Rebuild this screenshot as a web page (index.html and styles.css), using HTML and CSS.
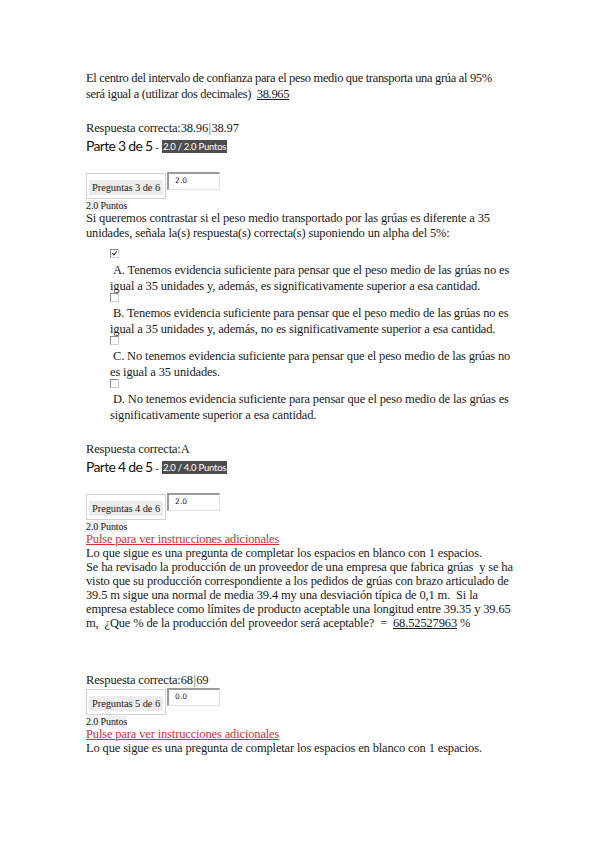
FILE: index.html
```html
<!DOCTYPE html>
<html lang="es">
<head>
<meta charset="utf-8">
<title>Resultados</title>
<link rel="stylesheet" href="styles.css">
</head>
<body>
<div class="page">
  <p class="text first">El centro del intervalo de confianza para el peso medio que transporta una grúa al 95%<br>será igual a (utilizar dos decimales)&nbsp; <span class="given">38.965</span></p>

  <p class="answer gap-big">Respuesta correcta:38.96<span class="sep">|</span>38.97</p>
  <h2 class="part">Parte 3 de 5 <span class="dash">-</span> <span class="badge">2.0 / 2.0 Puntos</span></h2>

  <div class="qhead gap-head">
    <div class="qnum"><span class="qlabel">Preguntas 3 de 6</span></div>
    <div class="score">2.0</div>
  </div>
  <div class="pts"><span>2.0 Puntos</span></div>
  <p class="text">Si queremos contrastar si el peso medio transportado por las grúas es diferente a 35<br>unidades, señala la(s) respuesta(s) correcta(s) suponiendo un alpha del 5%:</p>

  <div class="options">
    <div class="cb checked"></div>
    <p class="opt">&nbsp;A. Tenemos evidencia suficiente para pensar que el peso medio de las grúas no es<br>igual a 35 unidades y, además, es significativamente superior a esa cantidad.</p>
    <div class="cb"></div>
    <p class="opt">&nbsp;B. Tenemos evidencia suficiente para pensar que el peso medio de las grúas no es<br>igual a 35 unidades y, además, no es significativamente superior a esa cantidad.</p>
    <div class="cb"></div>
    <p class="opt">&nbsp;C. No tenemos evidencia suficiente para pensar que el peso medio de las grúas no<br>es igual a 35 unidades.</p>
    <div class="cb"></div>
    <p class="opt">&nbsp;D. No tenemos evidencia suficiente para pensar que el peso medio de las grúas es<br>significativamente superior a esa cantidad.</p>
  </div>

  <p class="answer gap-big">Respuesta correcta:A</p>
  <h2 class="part">Parte 4 de 5 <span class="dash">-</span> <span class="badge">2.0 / 4.0 Puntos</span></h2>

  <div class="qhead gap-head">
    <div class="qnum"><span class="qlabel">Preguntas 4 de 6</span></div>
    <div class="score">2.0</div>
  </div>
  <div class="pts"><span>2.0 Puntos</span></div>
  <a class="link" href="#">Pulse para ver instrucciones adicionales</a>
  <p class="text fill">Lo que sigue es una pregunta de completar los espacios en blanco con 1 espacios.<br>Se ha revisado la producción de un proveedor de una empresa que fabrica grúas&nbsp; y se ha<br>visto que su producción correspondiente a los pedidos de grúas con brazo articulado de<br>39.5 m sigue una normal de media 39.4 my una desviación típica de 0,1 m.&nbsp; Si la<br>empresa establece como límites de producto aceptable una longitud entre 39.35 y 39.65<br>m,&nbsp; ¿Que % de la producción del proveedor será aceptable?&nbsp; =&nbsp; <span class="given">68.52527963</span> %</p>

  <p class="answer gap-huge">Respuesta correcta:68<span class="sep">|</span>69</p>
  <div class="qhead">
    <div class="qnum"><span class="qlabel">Preguntas 5 de 6</span></div>
    <div class="score">0.0</div>
  </div>
  <div class="pts"><span>2.0 Puntos</span></div>
  <a class="link" href="#">Pulse para ver instrucciones adicionales</a>
  <p class="text fill">Lo que sigue es una pregunta de completar los espacios en blanco con 1 espacios.</p>
</div>
</body>
</html>
```
FILE: styles.css
```css
html, body {
  margin: 0;
  padding: 0;
  background: #ffffff;
}
body {
  font-family: "Liberation Serif", "Times New Roman", serif;
  font-size: 12.5px;
  line-height: 15.5px;
  letter-spacing: -0.15px;
  color: #1a1a1a;
}
.page {
  padding: 70px 0 40px 86px;
  width: 440px;
}
p {
  margin: 0;
}
.text,
.answer,
.opt {
  white-space: nowrap;
}
.first {
  line-height: 16px;
  letter-spacing: -0.33px;
}
.fill {
  line-height: 14px;
}
.given {
  text-decoration: underline;
}
.gap-big {
  margin-top: 19px;
}
.gap-huge {
  margin-top: 43px;
}
.sep {
  color: #555;
  padding: 0 0.5px;
}
.part {
  margin: 0;
  font-family: Lato, "Open Sans", sans-serif;
  font-weight: 400;
  font-size: 14px;
  line-height: 17px;
  letter-spacing: -0.7px;
  color: #111;
}
.dash {
  font-size: 10px;
  letter-spacing: 0;
}
.badge {
  display: inline-block;
  background: #4d4d4d;
  color: #fff;
  font-size: 9.5px;
  line-height: 13px;
  letter-spacing: -0.25px;
  padding: 0 1px;
  vertical-align: 1px;
}
.gap-head {
  margin-top: 16px;
}
.qhead {
  display: flex;
  align-items: flex-start;
}
.qnum {
  border: 1px solid #d2d2d2;
  padding: 6px 2px 3px 2px;
  margin-top: 1px;
}
.qlabel {
  display: block;
  background: #ececec;
  font-size: 10.5px;
  line-height: 15px;
  letter-spacing: -0.1px;
  padding: 0 3px;
  color: #222;
}
.score {
  width: 44px;
  height: 15px;
  margin-left: 1px;
  border: 1px solid #e2e2e2;
  border-top: 2px solid #9a9a9a;
  border-left: 2px solid #9a9a9a;
  font-family: "DejaVu Sans", sans-serif;
  font-size: 7.5px;
  line-height: 13px;
  letter-spacing: 0;
  padding-left: 6px;
  color: #222;
}
.pts {
  font-size: 10px;
  line-height: 11px;
  margin-top: 1px;
  letter-spacing: -0.1px;
}
.pts span {
  background: #f0f0f0;
}
.options {
  padding-left: 24px;
  padding-top: 9.5px;
}
.cb {
  width: 7px;
  height: 7px;
  border: 1px solid #8a8a8a;
  border-right-color: #cfcfcf;
  border-bottom-color: #cfcfcf;
  margin: -1px 0 4px 0;
  position: relative;
}
.cb.checked {
  margin: -2px 0 5px 0;
}
.cb.checked::after {
  content: "";
  position: absolute;
  left: 2px;
  top: 0px;
  width: 2px;
  height: 4px;
  border-right: 1.5px solid #222;
  border-bottom: 1.5px solid #222;
  transform: rotate(40deg);
}
.link {
  display: block;
  color: #d32f2f;
  text-decoration: underline;
  line-height: 14px;
}
```
